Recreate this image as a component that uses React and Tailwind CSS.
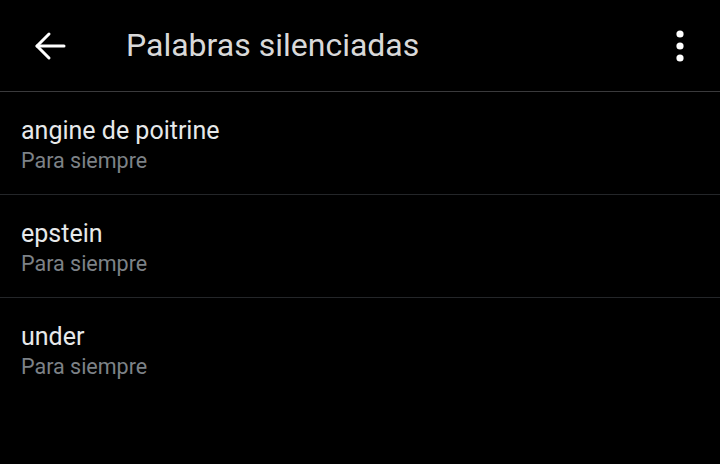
import React from 'react';

const words = [
  { id: 1, word: 'angine de poitrine', duration: 'Para siempre' },
  { id: 2, word: 'epstein', duration: 'Para siempre' },
  { id: 3, word: 'under', duration: 'Para siempre' },
];

const App = () => {
  return (
    <div className="w-[720px] h-[464px] bg-black text-[#e7e9ea] overflow-hidden" style={{ fontFamily: 'Roboto, "Noto Sans", sans-serif' }}>
      <div className="h-[92px] flex items-center border-b border-[#3a3a3c]">
        <button className="w-[98px] h-full flex items-center pl-[34px]">
          <svg width="32" height="30" viewBox="0 0 32 30" fill="none" stroke="#ffffff" strokeWidth="3" strokeLinecap="round" strokeLinejoin="round">
            <path d="M30 15H3" />
            <path d="M15 3L3 15L15 27" />
          </svg>
        </button>
        <h1 className="flex-1 pl-[28px] text-[32px] text-[#d9d9d9] font-normal leading-none pb-[2px]">Palabras silenciadas</h1>
        <button className="w-[80px] h-full flex items-center justify-center">
          <svg width="10" height="34" viewBox="0 0 10 34" fill="#ffffff">
            <circle cx="5" cy="5" r="3.6" />
            <circle cx="5" cy="17" r="3.6" />
            <circle cx="5" cy="29" r="3.6" />
          </svg>
        </button>
      </div>
      {words.map((item, idx) => (
        <div
          key={item.id}
          className={`h-[103px] flex flex-col justify-center px-[21px] pt-[5px] ${idx < words.length - 1 ? 'border-b border-[#242629]' : ''}`}
        >
          <div className="text-[25px] leading-[30px] text-[#e7e9ea]">{item.word}</div>
          <div className="text-[21.5px] leading-[30px] text-[#7d8287]">{item.duration}</div>
        </div>
      ))}
    </div>
  );
};

export default App;
